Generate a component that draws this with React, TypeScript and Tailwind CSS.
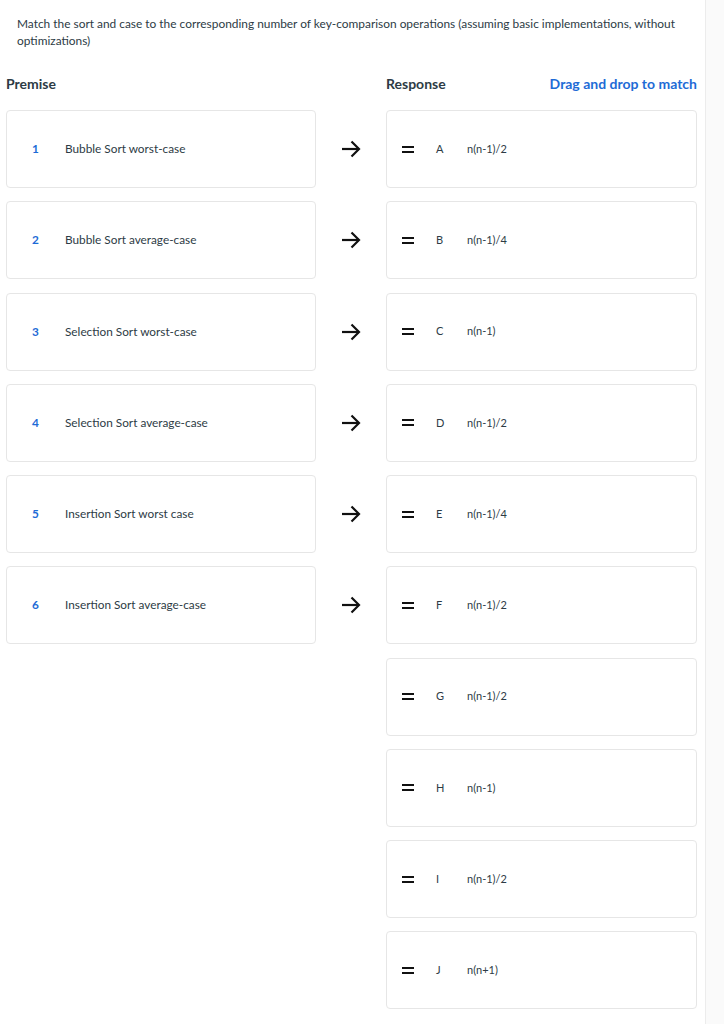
import React from "react";

const premises = [
  "Bubble Sort worst-case",
  "Bubble Sort average-case",
  "Selection Sort worst-case",
  "Selection Sort average-case",
  "Insertion Sort worst case",
  "Insertion Sort average-case",
];

const responses: [string, string][] = [
  ["A", "n(n-1)/2"],
  ["B", "n(n-1)/4"],
  ["C", "n(n-1)"],
  ["D", "n(n-1)/2"],
  ["E", "n(n-1)/4"],
  ["F", "n(n-1)/2"],
  ["G", "n(n-1)/2"],
  ["H", "n(n-1)"],
  ["I", "n(n-1)/2"],
  ["J", "n(n+1)"],
];

function Arrow() {
  return (
    <svg width="20" height="18" viewBox="0 0 20 18" fill="none">
      <path d="M1 9 H18" stroke="#111" strokeWidth="2.2" />
      <path d="M10.5 1.5 L18 9 L10.5 16.5" stroke="#111" strokeWidth="2.2" />
    </svg>
  );
}

function Equals() {
  return (
    <div className="flex flex-col gap-[3px] w-[12px]">
      <div className="h-[2px] bg-[#111]" />
      <div className="h-[2px] bg-[#111]" />
    </div>
  );
}

export default function App() {
  return (
    <div
      className="flex min-h-[1024px] bg-white text-[#2d3b45]"
      style={{ fontFamily: '"Source Sans Pro", Lato, "Open Sans", sans-serif' }}
    >
      <div className="w-[706px] border-r border-[#ececec]">
        <p className="pl-[17px] pr-6 pt-[15px] text-[11.9px] leading-[17px] text-[#2d3b45]">
          Match the sort and case to the corresponding number of key-comparison operations (assuming basic implementations, without optimizations)
        </p>
        <div className="grid grid-cols-[310px_70px_311px] pl-[6px] mt-[26px]">
          <div className="text-[14px] font-bold h-[18px] leading-[18px]">Premise</div>
          <div />
          <div className="flex justify-between text-[14px] font-bold h-[18px] leading-[18px]">
            <span>Response</span>
            <span className="text-[#1e6bd6]">Drag and drop to match</span>
          </div>
        </div>
        <div className="grid grid-cols-[310px_70px_311px] pl-[6px] mt-[17px] gap-y-[13.25px]">
          {responses.map(([letter, val], i) => (
            <React.Fragment key={letter}>
              {i < premises.length ? (
                <div className="h-[78px] rounded-[4px] border border-[#e6e6e6] flex items-center text-[11.8px]">
                  <span className="w-[58px] pl-[25px] font-bold text-[#1e6bd6] text-[11.8px]">{i + 1}</span>
                  <span>{premises[i]}</span>
                </div>
              ) : (
                <div />
              )}
              <div className="flex items-center justify-center">
                {i < premises.length ? <Arrow /> : null}
              </div>
              <div className="h-[78px] rounded-[4px] border border-[#e6e6e6] flex items-center text-[11px]">
                <div className="pl-[15px] w-[49px]">
                  <Equals />
                </div>
                <span className="w-[31px]">{letter}</span>
                <span>{val}</span>
              </div>
            </React.Fragment>
          ))}
        </div>
      </div>
      <div className="flex-1 bg-[#fafafa]" />
    </div>
  );
}
